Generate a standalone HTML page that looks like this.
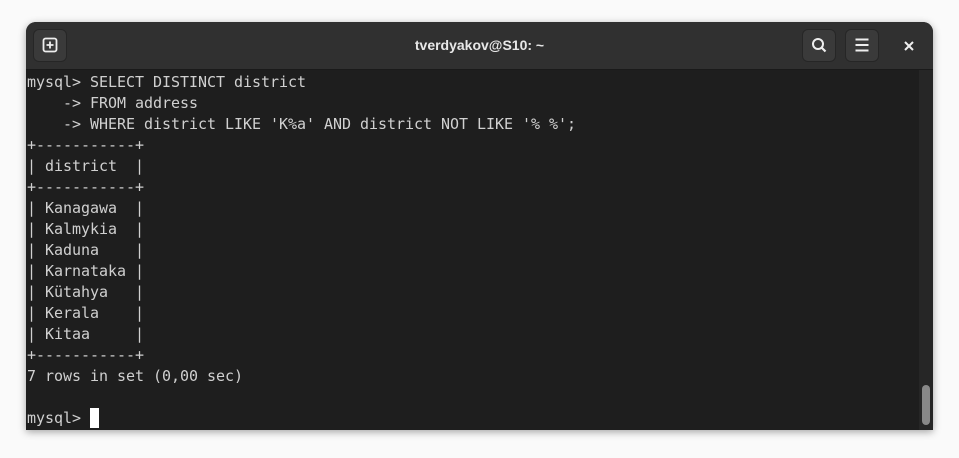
<!DOCTYPE html>
<html><head><style>
html,body{margin:0;padding:0;width:959px;height:458px;background:#fafafa;overflow:hidden}
.win{position:absolute;left:26px;top:22px;width:907px;height:408px;background:#1e1e1e;border-radius:10px 10px 0 0;box-shadow:0 2px 8px rgba(0,0,0,.35);overflow:hidden}
.hdr{position:absolute;left:0;top:0;width:907px;height:47px;background:#303030;border-bottom:1px solid #1a1a1a}
.btn{position:absolute;top:7px;width:34px;height:33px;background:#3a3a3a;border-radius:6px;border:1px solid #262626;box-sizing:border-box}
.title{position:absolute;top:0;left:0;width:907px;text-align:center;color:#e8e8e8;font:bold 14px "Liberation Sans",sans-serif;line-height:47px}
pre{position:absolute;left:1px;top:50px;margin:0;font:15px "DejaVu Sans Mono","Liberation Mono",monospace;line-height:21px;color:#d0d0d0;letter-spacing:-0.03px}
.sb{position:absolute;right:0;top:48px;width:14px;height:360px;background:#262626}
.th{position:absolute;left:3px;top:315px;width:8px;height:40px;background:#888;border-radius:4px}
.cur{display:inline-block;width:9px;height:20px;background:#fff;vertical-align:-5px}
</style></head><body>
<div class="win">
<div class="hdr">
<div class="btn" style="left:7px"><svg width="32" height="31" viewBox="0 0 32 31"><rect x="9.5" y="8.5" width="13" height="13" rx="2" fill="none" stroke="#eee" stroke-width="1.8"/><path d="M16 11.5v7M12.5 15h7" stroke="#eee" stroke-width="1.8"/></svg></div>
<div class="title">tverdyakov@S10: ~</div>
<div class="btn" style="left:776px"><svg width="32" height="31" viewBox="0 0 32 31"><circle cx="15" cy="14" r="5" fill="none" stroke="#eee" stroke-width="2"/><path d="M18.5 17.5l4 4" stroke="#eee" stroke-width="2.2"/></svg></div>
<div class="btn" style="left:819px"><svg width="32" height="31" viewBox="0 0 32 31"><path d="M9.5 9.5h13M9.5 15h13M9.5 20.5h13" stroke="#eee" stroke-width="2"/></svg></div>
<svg style="position:absolute;left:877px;top:18px" width="12" height="12" viewBox="0 0 12 12"><path d="M2 2l8 8M10 2l-8 8" stroke="#eee" stroke-width="2"/></svg>
</div>
<pre>mysql&gt; SELECT DISTINCT district
    -&gt; FROM address
    -&gt; WHERE district LIKE 'K%a' AND district NOT LIKE '% %';
+-----------+
| district  |
+-----------+
| Kanagawa  |
| Kalmykia  |
| Kaduna    |
| Karnataka |
| Kütahya   |
| Kerala    |
| Kitaa     |
+-----------+
7 rows in set (0,00 sec)

mysql&gt; <span class="cur"></span></pre>
<div class="sb"><div class="th"></div></div>
</div>
</body></html>
